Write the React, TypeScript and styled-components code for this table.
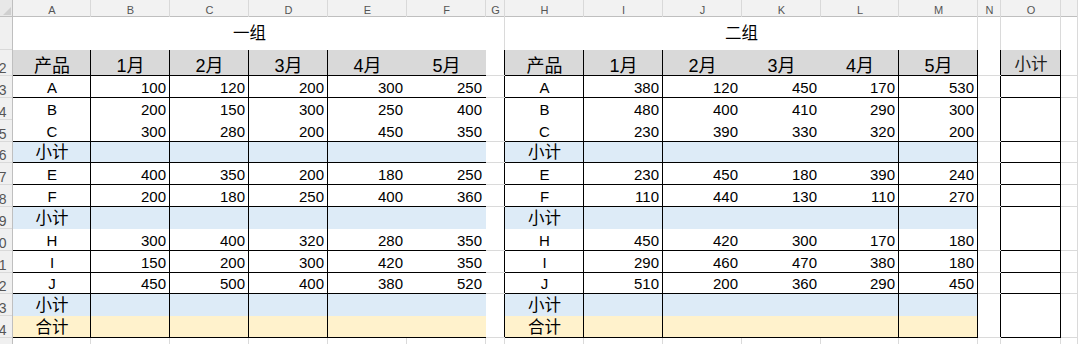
import React from 'react';
import styled, { createGlobalStyle, css } from 'styled-components';

type Line = 'black' | 'grid' | 'none';
type Fill = 'white' | 'head' | 'blue' | 'yellow' | 'none';
type Kind = 'title' | 'head' | 'subhead' | 'num' | 'label' | 'cjk' | 'empty';

// the last column (P) only peeks in at the right edge, so its letter stays off-frame
const COLS = ['A', 'B', 'C', 'D', 'E', 'F', 'G', 'H', 'I', 'J', 'K', 'L', 'M', 'N', 'O', ''];
const COL_WIDTHS = [78, 79, 79, 79, 79, 79, 19, 79, 79, 79, 79, 78, 79, 23, 60, 17];
// rows 1..15
const ROW_HEIGHTS = [33, 26, 22, 22, 22, 21, 22, 22, 22, 22, 22, 21, 22, 22, 22];

const FILL: Record<Fill, string> = {
  white: '#ffffff',
  head: '#d9d9d9',
  blue: '#ddebf7',
  yellow: '#fff2cc',
  none: 'transparent',
};

const LINE: Record<Line, string> = {
  black: '#000000',
  grid: '#dadada',
  none: 'transparent',
};

const MONTHS = ['产品', '1月', '2月', '3月', '4月', '5月'];

const GROUP_1: Record<number, (string | number)[]> = {
  3: ['A', 100, 120, 200, 300, 250],
  4: ['B', 200, 150, 300, 250, 400],
  5: ['C', 300, 280, 200, 450, 350],
  6: ['小计'],
  7: ['E', 400, 350, 200, 180, 250],
  8: ['F', 200, 180, 250, 400, 360],
  9: ['小计'],
  10: ['H', 300, 400, 320, 280, 350],
  11: ['I', 150, 200, 300, 420, 350],
  12: ['J', 450, 500, 400, 380, 520],
  13: ['小计'],
  14: ['合计'],
};

const GROUP_2: Record<number, (string | number)[]> = {
  3: ['A', 380, 120, 450, 170, 530],
  4: ['B', 480, 400, 410, 290, 300],
  5: ['C', 230, 390, 330, 320, 200],
  6: ['小计'],
  7: ['E', 230, 450, 180, 390, 240],
  8: ['F', 110, 440, 130, 110, 270],
  9: ['小计'],
  10: ['H', 450, 420, 300, 170, 180],
  11: ['I', 290, 460, 470, 380, 180],
  12: ['J', 510, 200, 360, 290, 450],
  13: ['小计'],
  14: ['合计'],
};

const BLACK_BOTTOM = new Set([2, 3, 5, 6, 7, 8, 10, 11, 12, 14]);
const BLACK_RIGHT = new Set([0, 1, 2, 3, 6, 7, 8, 11, 12, 13, 14]);
const SUBTOTAL_ROWS = new Set([6, 9, 13]);

const GlobalStyle = createGlobalStyle`
  html, body {
    margin: 0;
    padding: 0;
    background: #ffffff;
    overflow: hidden;
  }
`;

const Sheet = styled.div`
  display: grid;
  grid-template-columns: 13px ${COL_WIDTHS.map((w) => `${w}px`).join(' ')};
  grid-template-rows: 17px ${ROW_HEIGHTS.map((h) => `${h}px`).join(' ')};
  width: max-content;
  font-family: "Liberation Sans", "Noto Sans CJK SC", sans-serif;
  color: #000;
`;

const Corner = styled.div`
  display: flex;
  align-items: flex-end;
  justify-content: flex-end;
  padding: 0 2px 2px 0;
  background: #e8e8e8;
  box-shadow: inset -1px 0 0 #bfbfbf, inset 0 -1px 0 #bfbfbf;
`;

const ColHead = styled.div`
  display: flex;
  align-items: flex-end;
  justify-content: center;
  padding-bottom: 1px;
  overflow: hidden;
  background: #f2f2f2;
  box-shadow: inset -1px 0 0 #d9d9d9, inset 0 -1px 0 #bfbfbf;
  font-size: 11px;
  line-height: 1;
  color: #555;
`;

const RowHead = styled.div`
  display: flex;
  align-items: flex-end;
  justify-content: flex-end;
  padding: 0 6.5px 1px 0;
  overflow: hidden;
  white-space: nowrap;
  background: #f0f0f0;
  box-shadow: inset -1px 0 0 #bfbfbf, inset 0 -1px 0 #d9d9d9;
  font-size: 14px;
  line-height: 1;
  color: #555;
`;

const KIND: Record<Kind, ReturnType<typeof css>> = {
  title: css`font-size: 16.5px; padding-bottom: 8.5px; justify-content: center;`,
  head: css`font-size: 18px; padding-bottom: 1.5px; justify-content: center;`,
  subhead: css`font-size: 16.5px; padding-bottom: 3.5px; justify-content: center; color: #222;`,
  num: css`font-size: 15px; padding: 0 4px 2.7px 0; justify-content: flex-end;`,
  label: css`font-size: 15px; padding-bottom: 2.7px; justify-content: center;`,
  cjk: css`font-size: 16.5px; padding-bottom: 2.5px; justify-content: center;`,
  empty: css``,
};

const Cell = styled.div<{ $fill: Fill; $right: Line; $bottom: Line; $kind: Kind; $span?: number }>`
  display: flex;
  align-items: flex-end;
  min-width: 0;
  overflow: hidden;
  white-space: nowrap;
  line-height: 1;
  grid-column: span ${(p) => p.$span ?? 1};
  background: ${(p) => FILL[p.$fill]};
  box-shadow: inset 0 -1px 0 ${(p) => LINE[p.$bottom]}, inset -1px 0 0 ${(p) => LINE[p.$right]};
  ${(p) => KIND[p.$kind]}
`;

const inGroup1 = (c: number) => c >= 0 && c <= 5;
const inGroup2 = (c: number) => c >= 7 && c <= 12;
const isTable = (c: number) => inGroup1(c) || inGroup2(c) || c === 14;

const tableCell = (r: number, c: number) => {
  let fill: Fill = 'none';
  if (isTable(c)) {
    if (r === 2) fill = 'head';
    else if (c !== 14 && SUBTOTAL_ROWS.has(r)) fill = 'blue';
    else if (c !== 14 && r === 14) fill = 'yellow';
    else fill = 'white';
  }

  const right: Line = BLACK_RIGHT.has(c) ? 'black' : c === 15 ? 'grid' : 'none';
  const bottom: Line = BLACK_BOTTOM.has(r) ? (isTable(c) ? 'black' : 'grid') : 'none';

  let text: string | number = '';
  let kind: Kind = 'empty';
  const idx = inGroup1(c) ? c : inGroup2(c) ? c - 7 : -1;

  if (idx >= 0) {
    if (r === 2) {
      text = MONTHS[idx];
      kind = 'head';
    } else {
      const data = (inGroup1(c) ? GROUP_1 : GROUP_2)[r] || [];
      const value = data[idx];
      if (value !== undefined) {
        text = value;
        if (idx > 0) kind = 'num';
        else kind = /^[A-Z]$/.test(String(value)) ? 'label' : 'cjk';
      }
    }
  } else if (c === 14 && r === 2) {
    text = '小计';
    kind = 'subhead';
  }

  return (
    <Cell key={`${r}-${c}`} $fill={fill} $right={right} $bottom={bottom} $kind={kind}>
      {text}
    </Cell>
  );
};

const titleRow = () => [
  <Cell key="t1" $span={6} $fill="white" $right="none" $bottom="none" $kind="title">一组</Cell>,
  <Cell key="tg" $fill="none" $right="grid" $bottom="none" $kind="empty" />,
  <Cell key="t2" $span={6} $fill="white" $right="grid" $bottom="none" $kind="title">二组</Cell>,
  <Cell key="tn" $fill="none" $right="grid" $bottom="none" $kind="empty" />,
  <Cell key="to" $fill="none" $right="grid" $bottom="none" $kind="empty" />,
  <Cell key="tp" $fill="none" $right="grid" $bottom="none" $kind="empty" />,
];

const App = () => {
  const cells: React.ReactNode[] = [];

  cells.push(
    <Corner key="corner">
      <svg width="8" height="8" viewBox="0 0 8 8">
        <polygon points="8,0 8,8 0,8" fill="#cfcfcf" />
      </svg>
    </Corner>
  );
  COLS.forEach((col, c) => cells.push(<ColHead key={`ch${c}`}>{col}</ColHead>));

  for (let r = 1; r <= 15; r++) {
    cells.push(<RowHead key={`rh${r}`}>{r === 1 ? '' : r}</RowHead>);
    if (r === 1) {
      cells.push(...titleRow());
    } else if (r === 15) {
      COLS.forEach((_, c) =>
        cells.push(<Cell key={`15-${c}`} $fill="none" $right="grid" $bottom="none" $kind="empty" />)
      );
    } else {
      COLS.forEach((_, c) => cells.push(tableCell(r, c)));
    }
  }

  return (
    <>
      <GlobalStyle />
      <Sheet>{cells}</Sheet>
    </>
  );
};

export default App;
